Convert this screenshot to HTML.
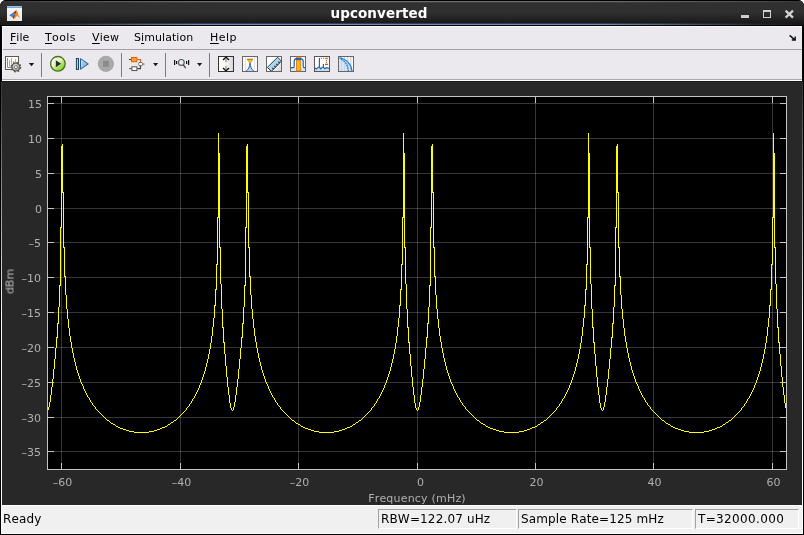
<!DOCTYPE html>
<html><head><meta charset="utf-8"><title>upconverted</title>
<style>
html,body{margin:0;padding:0;background:#fff;}
body{font-kerning:none;font-variant-ligatures:none;width:804px;height:535px;position:relative;overflow:hidden;font-family:"DejaVu Sans","Liberation Sans",sans-serif;}
div{position:absolute;box-sizing:border-box;}
#win{left:0;top:0;width:804px;height:535px;background:#000;border-radius:6px 6px 0 0;overflow:hidden;}
#title{left:0;top:0;width:804px;height:26px;background:linear-gradient(#000 0px,#000 1px,#343434 1px,#343434 2px,#323232 2px,#323232 3px,#303030 3px,#303030 12px,#222222 19px,#191919 23px,#141414 25px,#000 25px,#000 26px);}
#tblue{left:0;top:23px;width:804px;height:2px;background:linear-gradient(to right,rgba(106,140,184,0) 0px,rgba(106,140,184,0.25) 60px,rgba(106,140,184,1) 200px,rgba(106,140,184,1) 604px,rgba(106,140,184,0.25) 744px,rgba(106,140,184,0) 804px);}
#thi{left:0;top:1px;width:804px;height:1px;background:linear-gradient(to right,rgba(112,112,112,0) 0px,rgba(112,112,112,0.35) 40px,rgba(112,112,112,1) 220px,rgba(112,112,112,1) 584px,rgba(112,112,112,0.35) 764px,rgba(112,112,112,0) 804px);}
#thi2{left:0;top:2px;width:804px;height:1px;background:linear-gradient(to right,rgba(62,62,62,0) 0px,rgba(62,62,62,1) 220px,rgba(62,62,62,1) 584px,rgba(62,62,62,0) 804px);}
#tblue2{left:0;top:23px;width:804px;height:1px;background:rgba(24,24,24,0.65);}
#ttext{left:0;width:758px;top:5px;letter-spacing:0.1px;text-align:center;color:#fff;font-weight:bold;font-size:13.5px;line-height:16px;}
#sideL{left:1px;top:26px;width:1px;height:508px;background:linear-gradient(#060606 0px,#060606 55px,#333 56px,#fff 300px,#fff 508px);}
#sideL2{left:2px;top:26px;width:1px;height:54px;background:#f6f4f8;}
#sideR{left:802px;top:26px;width:1px;height:508px;background:linear-gradient(#060606 0px,#060606 55px,#333 56px,#fff 300px,#fff 508px);}
#menu{left:2px;top:26px;width:800px;height:23px;background:#ebe9ed;border-top:1px solid #f8f7fa;}
.mi{font-size:11px;line-height:14px;color:#000;white-space:pre;}
.mi u{text-decoration:underline;text-underline-offset:1.5px;}
#sep1{left:2px;top:49px;width:800px;height:1px;background:#a3a3a6;}
#tool{left:2px;top:50px;width:800px;height:29px;background:#ebe9ed;}
#tb1{left:2px;top:79px;width:800px;height:1px;background:#a9a9ad;}
#tb2{left:2px;top:80px;width:800px;height:1px;background:#ffffff;}
#plot{left:2px;top:81px;width:800px;height:424px;background:#282828;border-top:1px solid #1a1a1a;}
#axes{left:47px;top:96px;width:740px;height:374px;background:#000;}
.g{background:rgba(255,255,255,0.21);}
.t{background:#c4c4c4;}
#axb{left:47px;top:96px;width:740px;height:374px;border:1px solid #c4c4c4;}
.xl,.yl,.mi,#xlabel,#ttext,.sf,#ready{will-change:transform;}
.xl{color:#afafaf;font-size:11px;line-height:13px;text-align:center;}
.yl{color:#afafaf;font-size:11px;line-height:13px;text-align:right;}
#xlabel{left:317px;width:200px;top:492px;text-align:center;color:#afafaf;font-size:11px;line-height:13px;letter-spacing:0.2px;}
#ylabel{left:-10.5px;top:275px;width:40px;height:13px;text-align:center;color:#bcbcbc;font-size:11px;line-height:13px;transform:rotate(-90deg);}
#status{left:2px;top:505px;width:800px;height:29px;background:#f0f0f0;border-top:1px solid #fff;border-bottom:1px solid #fff;}
.sf{top:509px;height:20px;border:1px solid;border-color:#a0a0a0 #fff #fff #a0a0a0;font-size:12px;line-height:16px;color:#000;padding:1px 0 0 2px;white-space:pre;}
#ready{left:3px;top:511px;letter-spacing:0.15px;font-size:12px;line-height:16px;color:#000;}
svg{position:absolute;left:0;top:0;}
</style></head><body>
<div id="win">
<div id="title"></div><div id="thi"></div><div id="thi2"></div><div id="tblue"></div><div id="tblue2"></div><div id="sideL"></div><div id="sideR"></div>
<div id="ttext">upconverted</div>
<div id="menu"></div>
<div class="mi" style="left:10px;top:31px"><u>F</u>ile</div>
<div class="mi" style="left:45px;top:31px;letter-spacing:0.35px"><u>T</u>ools</div>
<div class="mi" style="left:92px;top:31px;letter-spacing:0.25px"><u>V</u>iew</div>
<div class="mi" style="left:134px;top:31px;letter-spacing:0.07px">S<u>i</u>mulation</div>
<div class="mi" style="left:209.6px;top:31px;letter-spacing:0.5px"><u>H</u>elp</div>
<div id="sep1"></div>
<div id="tool"></div>
<div id="sideL2"></div><div id="tb1"></div><div id="tb2"></div>
<div id="plot"></div>
<div id="axes"></div>
<div class="g" style="left:61px;top:96px;width:1px;height:373px"></div><div class="g" style="left:180px;top:96px;width:1px;height:373px"></div><div class="g" style="left:298px;top:96px;width:1px;height:373px"></div><div class="g" style="left:417px;top:96px;width:1px;height:373px"></div><div class="g" style="left:535px;top:96px;width:1px;height:373px"></div><div class="g" style="left:653px;top:96px;width:1px;height:373px"></div><div class="g" style="left:772px;top:96px;width:1px;height:373px"></div><div class="g" style="left:47px;top:103px;width:739px;height:1px"></div><div class="g" style="left:47px;top:138px;width:739px;height:1px"></div><div class="g" style="left:47px;top:173px;width:739px;height:1px"></div><div class="g" style="left:47px;top:208px;width:739px;height:1px"></div><div class="g" style="left:47px;top:242px;width:739px;height:1px"></div><div class="g" style="left:47px;top:277px;width:739px;height:1px"></div><div class="g" style="left:47px;top:312px;width:739px;height:1px"></div><div class="g" style="left:47px;top:347px;width:739px;height:1px"></div><div class="g" style="left:47px;top:382px;width:739px;height:1px"></div><div class="g" style="left:47px;top:417px;width:739px;height:1px"></div><div class="g" style="left:47px;top:451px;width:739px;height:1px"></div>
<svg width="804" height="535" viewBox="0 0 804 535"><path d="M48 407h1v3h-1zM49 402h1v5h-1zM50 395h1v7h-1zM51 387h1v8h-1zM52 379h1v8h-1zM53 369h1v10h-1zM54 359h1v10h-1zM55 348h1v11h-1zM56 337h1v11h-1zM57 323h1v15h-1zM58 307h1v17h-1zM59 285h1v22h-1zM60 227h1v59h-1zM61 146h1v82h-1zM62 144h1v49h-1zM63 192h1v56h-1zM64 247h1v30h-1zM65 276h1v19h-1zM66 295h1v14h-1zM67 309h1v10h-1zM68 319h1v9h-1zM69 328h1v8h-1zM70 336h1v6h-1zM71 342h1v6h-1zM72 348h1v5h-1zM73 353h1v5h-1zM74 358h1v4h-1zM75 362h1v4h-1zM76 366h1v4h-1zM77 370h1v3h-1zM78 373h1v3h-1zM79 376h1v3h-1zM80 379h1v3h-1zM81 382h1v2h-1zM82 384h1v2h-1zM83 386h1v3h-1zM84 389h1v2h-1zM85 391h1v2h-1zM86 393h1v2h-1zM87 395h1v2h-1zM88 397h1v1h-1zM89 398h1v2h-1zM90 400h1v2h-1zM91 402h1v1h-1zM92 403h1v2h-1zM93 405h1v1h-1zM94 406h1v1h-1zM95 407h1v2h-1zM96 409h1v1h-1zM97 410h1v1h-1zM98 411h1v1h-1zM99 412h1v1h-1zM100 413h1v1h-1zM101 414h1v1h-1zM102 415h1v1h-1zM103 416h1v1h-1zM104 417h1v1h-1zM105 418h1v1h-1zM106 419h1v1h-1zM107 420h2v1h-2zM109 421h1v1h-1zM110 422h1v1h-1zM111 423h2v1h-2zM113 424h2v1h-2zM115 425h1v1h-1zM116 426h2v1h-2zM118 427h2v1h-2zM120 428h3v1h-3zM123 429h3v1h-3zM126 430h3v1h-3zM129 431h5v1h-5zM134 432h15v1h-15zM149 431h5v1h-5zM154 430h3v1h-3zM157 429h3v1h-3zM160 428h2v1h-2zM162 427h3v1h-3zM165 426h2v1h-2zM167 425h1v1h-1zM168 424h2v1h-2zM170 423h1v1h-1zM171 422h2v1h-2zM173 421h1v1h-1zM174 420h2v1h-2zM176 419h1v1h-1zM177 418h1v1h-1zM178 417h1v1h-1zM179 416h1v1h-1zM180 415h1v1h-1zM181 414h1v1h-1zM182 413h1v1h-1zM183 412h1v1h-1zM184 411h1v1h-1zM185 410h1v1h-1zM186 408h1v2h-1zM187 407h1v1h-1zM188 406h1v1h-1zM189 404h1v2h-1zM190 403h1v1h-1zM191 401h1v2h-1zM192 399h1v2h-1zM193 398h1v1h-1zM194 396h1v2h-1zM195 394h1v2h-1zM196 392h1v2h-1zM197 390h1v2h-1zM198 388h1v2h-1zM199 385h1v3h-1zM200 383h1v2h-1zM201 380h1v3h-1zM202 377h1v3h-1zM203 374h1v3h-1zM204 371h1v3h-1zM205 367h1v4h-1zM206 363h1v4h-1zM207 359h1v4h-1zM208 354h1v5h-1zM209 349h1v5h-1zM210 343h1v6h-1zM211 336h1v7h-1zM212 327h1v9h-1zM213 318h1v9h-1zM214 305h1v13h-1zM215 289h1v17h-1zM216 264h1v26h-1zM217 217h1v48h-1zM218 133h1v85h-1zM219 153h1v95h-1zM220 247h1v37h-1zM221 284h1v25h-1zM222 309h1v19h-1zM223 327h1v16h-1zM224 342h1v12h-1zM225 354h1v12h-1zM226 366h1v11h-1zM227 377h1v10h-1zM228 387h1v8h-1zM229 395h1v8h-1zM230 403h1v5h-1zM231 408h1v2h-1zM232 410h1v1h-1zM233 407h1v3h-1zM234 402h1v5h-1zM235 395h1v7h-1zM236 387h1v8h-1zM237 379h1v8h-1zM238 369h1v10h-1zM239 359h1v10h-1zM240 348h1v11h-1zM241 337h1v11h-1zM242 323h1v15h-1zM243 307h1v17h-1zM244 285h1v22h-1zM245 227h1v59h-1zM246 146h1v82h-1zM247 144h1v49h-1zM248 192h1v56h-1zM249 247h1v30h-1zM250 276h1v19h-1zM251 295h1v14h-1zM252 309h1v10h-1zM253 319h1v9h-1zM254 328h1v8h-1zM255 336h1v6h-1zM256 342h1v6h-1zM257 348h1v5h-1zM258 353h1v5h-1zM259 358h1v4h-1zM260 362h1v4h-1zM261 366h1v4h-1zM262 370h1v3h-1zM263 373h1v3h-1zM264 376h1v3h-1zM265 379h1v3h-1zM266 382h1v2h-1zM267 384h1v2h-1zM268 386h1v3h-1zM269 389h1v2h-1zM270 391h1v2h-1zM271 393h1v2h-1zM272 395h1v2h-1zM273 397h1v1h-1zM274 398h1v2h-1zM275 400h1v2h-1zM276 402h1v1h-1zM277 403h1v2h-1zM278 405h1v1h-1zM279 406h1v1h-1zM280 407h1v2h-1zM281 409h1v1h-1zM282 410h1v1h-1zM283 411h1v1h-1zM284 412h1v1h-1zM285 413h1v1h-1zM286 414h1v1h-1zM287 415h1v1h-1zM288 416h1v1h-1zM289 417h1v1h-1zM290 418h1v1h-1zM291 419h1v1h-1zM292 420h2v1h-2zM294 421h1v1h-1zM295 422h1v1h-1zM296 423h2v1h-2zM298 424h2v1h-2zM300 425h1v1h-1zM301 426h2v1h-2zM303 427h2v1h-2zM305 428h3v1h-3zM308 429h3v1h-3zM311 430h3v1h-3zM314 431h5v1h-5zM319 432h15v1h-15zM334 431h5v1h-5zM339 430h3v1h-3zM342 429h3v1h-3zM345 428h2v1h-2zM347 427h3v1h-3zM350 426h2v1h-2zM352 425h1v1h-1zM353 424h2v1h-2zM355 423h1v1h-1zM356 422h2v1h-2zM358 421h1v1h-1zM359 420h2v1h-2zM361 419h1v1h-1zM362 418h1v1h-1zM363 417h1v1h-1zM364 416h1v1h-1zM365 415h1v1h-1zM366 414h1v1h-1zM367 413h1v1h-1zM368 412h1v1h-1zM369 411h1v1h-1zM370 410h1v1h-1zM371 408h1v2h-1zM372 407h1v1h-1zM373 406h1v1h-1zM374 404h1v2h-1zM375 403h1v1h-1zM376 401h1v2h-1zM377 399h1v2h-1zM378 398h1v1h-1zM379 396h1v2h-1zM380 394h1v2h-1zM381 392h1v2h-1zM382 390h1v2h-1zM383 388h1v2h-1zM384 385h1v3h-1zM385 383h1v2h-1zM386 380h1v3h-1zM387 377h1v3h-1zM388 374h1v3h-1zM389 371h1v3h-1zM390 367h1v4h-1zM391 363h1v4h-1zM392 359h1v4h-1zM393 354h1v5h-1zM394 349h1v5h-1zM395 343h1v6h-1zM396 336h1v7h-1zM397 327h1v9h-1zM398 318h1v9h-1zM399 305h1v13h-1zM400 289h1v17h-1zM401 264h1v26h-1zM402 217h1v48h-1zM403 133h1v85h-1zM404 153h1v95h-1zM405 247h1v37h-1zM406 284h1v25h-1zM407 309h1v19h-1zM408 327h1v16h-1zM409 342h1v12h-1zM410 354h1v12h-1zM411 366h1v11h-1zM412 377h1v10h-1zM413 387h1v8h-1zM414 395h1v8h-1zM415 403h1v5h-1zM416 408h1v2h-1zM417 410h1v1h-1zM418 407h1v3h-1zM419 402h1v5h-1zM420 395h1v7h-1zM421 387h1v8h-1zM422 379h1v8h-1zM423 369h1v10h-1zM424 359h1v10h-1zM425 348h1v11h-1zM426 337h1v11h-1zM427 323h1v15h-1zM428 307h1v17h-1zM429 285h1v22h-1zM430 227h1v59h-1zM431 146h1v82h-1zM432 144h1v49h-1zM433 192h1v56h-1zM434 247h1v30h-1zM435 276h1v19h-1zM436 295h1v14h-1zM437 309h1v10h-1zM438 319h1v9h-1zM439 328h1v8h-1zM440 336h1v6h-1zM441 342h1v6h-1zM442 348h1v5h-1zM443 353h1v5h-1zM444 358h1v4h-1zM445 362h1v4h-1zM446 366h1v4h-1zM447 370h1v3h-1zM448 373h1v3h-1zM449 376h1v3h-1zM450 379h1v3h-1zM451 382h1v2h-1zM452 384h1v2h-1zM453 386h1v3h-1zM454 389h1v2h-1zM455 391h1v2h-1zM456 393h1v2h-1zM457 395h1v2h-1zM458 397h1v1h-1zM459 398h1v2h-1zM460 400h1v2h-1zM461 402h1v1h-1zM462 403h1v2h-1zM463 405h1v1h-1zM464 406h1v1h-1zM465 407h1v2h-1zM466 409h1v1h-1zM467 410h1v1h-1zM468 411h1v1h-1zM469 412h1v1h-1zM470 413h1v1h-1zM471 414h1v1h-1zM472 415h1v1h-1zM473 416h1v1h-1zM474 417h1v1h-1zM475 418h1v1h-1zM476 419h1v1h-1zM477 420h2v1h-2zM479 421h1v1h-1zM480 422h1v1h-1zM481 423h2v1h-2zM483 424h2v1h-2zM485 425h1v1h-1zM486 426h2v1h-2zM488 427h2v1h-2zM490 428h3v1h-3zM493 429h3v1h-3zM496 430h3v1h-3zM499 431h5v1h-5zM504 432h15v1h-15zM519 431h5v1h-5zM524 430h3v1h-3zM527 429h3v1h-3zM530 428h2v1h-2zM532 427h3v1h-3zM535 426h2v1h-2zM537 425h1v1h-1zM538 424h2v1h-2zM540 423h1v1h-1zM541 422h2v1h-2zM543 421h1v1h-1zM544 420h2v1h-2zM546 419h1v1h-1zM547 418h1v1h-1zM548 417h1v1h-1zM549 416h1v1h-1zM550 415h1v1h-1zM551 414h1v1h-1zM552 413h1v1h-1zM553 412h1v1h-1zM554 411h1v1h-1zM555 410h1v1h-1zM556 408h1v2h-1zM557 407h1v1h-1zM558 406h1v1h-1zM559 404h1v2h-1zM560 403h1v1h-1zM561 401h1v2h-1zM562 399h1v2h-1zM563 398h1v1h-1zM564 396h1v2h-1zM565 394h1v2h-1zM566 392h1v2h-1zM567 390h1v2h-1zM568 388h1v2h-1zM569 385h1v3h-1zM570 383h1v2h-1zM571 380h1v3h-1zM572 377h1v3h-1zM573 374h1v3h-1zM574 371h1v3h-1zM575 367h1v4h-1zM576 363h1v4h-1zM577 359h1v4h-1zM578 354h1v5h-1zM579 349h1v5h-1zM580 343h1v6h-1zM581 336h1v7h-1zM582 327h1v9h-1zM583 318h1v9h-1zM584 305h1v13h-1zM585 289h1v17h-1zM586 264h1v26h-1zM587 217h1v48h-1zM588 133h1v85h-1zM589 153h1v95h-1zM590 247h1v37h-1zM591 284h1v25h-1zM592 309h1v19h-1zM593 327h1v16h-1zM594 342h1v12h-1zM595 354h1v12h-1zM596 366h1v11h-1zM597 377h1v10h-1zM598 387h1v8h-1zM599 395h1v8h-1zM600 403h1v5h-1zM601 408h1v2h-1zM602 410h1v1h-1zM603 407h1v3h-1zM604 402h1v5h-1zM605 395h1v7h-1zM606 387h1v8h-1zM607 379h1v8h-1zM608 369h1v10h-1zM609 359h1v10h-1zM610 348h1v11h-1zM611 337h1v11h-1zM612 323h1v15h-1zM613 307h1v17h-1zM614 285h1v22h-1zM615 227h1v59h-1zM616 146h1v82h-1zM617 144h1v49h-1zM618 192h1v56h-1zM619 247h1v30h-1zM620 276h1v19h-1zM621 295h1v14h-1zM622 309h1v10h-1zM623 319h1v9h-1zM624 328h1v8h-1zM625 336h1v6h-1zM626 342h1v6h-1zM627 348h1v5h-1zM628 353h1v5h-1zM629 358h1v4h-1zM630 362h1v4h-1zM631 366h1v4h-1zM632 370h1v3h-1zM633 373h1v3h-1zM634 376h1v3h-1zM635 379h1v3h-1zM636 382h1v2h-1zM637 384h1v2h-1zM638 386h1v3h-1zM639 389h1v2h-1zM640 391h1v2h-1zM641 393h1v2h-1zM642 395h1v2h-1zM643 397h1v1h-1zM644 398h1v2h-1zM645 400h1v2h-1zM646 402h1v1h-1zM647 403h1v2h-1zM648 405h1v1h-1zM649 406h1v1h-1zM650 407h1v2h-1zM651 409h1v1h-1zM652 410h1v1h-1zM653 411h1v1h-1zM654 412h1v1h-1zM655 413h1v1h-1zM656 414h1v1h-1zM657 415h1v1h-1zM658 416h1v1h-1zM659 417h1v1h-1zM660 418h1v1h-1zM661 419h1v1h-1zM662 420h2v1h-2zM664 421h1v1h-1zM665 422h1v1h-1zM666 423h2v1h-2zM668 424h2v1h-2zM670 425h1v1h-1zM671 426h2v1h-2zM673 427h2v1h-2zM675 428h3v1h-3zM678 429h3v1h-3zM681 430h3v1h-3zM684 431h5v1h-5zM689 432h15v1h-15zM704 431h5v1h-5zM709 430h3v1h-3zM712 429h3v1h-3zM715 428h2v1h-2zM717 427h3v1h-3zM720 426h2v1h-2zM722 425h1v1h-1zM723 424h2v1h-2zM725 423h1v1h-1zM726 422h2v1h-2zM728 421h1v1h-1zM729 420h2v1h-2zM731 419h1v1h-1zM732 418h1v1h-1zM733 417h1v1h-1zM734 416h1v1h-1zM735 415h1v1h-1zM736 414h1v1h-1zM737 413h1v1h-1zM738 412h1v1h-1zM739 411h1v1h-1zM740 410h1v1h-1zM741 408h1v2h-1zM742 407h1v1h-1zM743 406h1v1h-1zM744 404h1v2h-1zM745 403h1v1h-1zM746 401h1v2h-1zM747 399h1v2h-1zM748 398h1v1h-1zM749 396h1v2h-1zM750 394h1v2h-1zM751 392h1v2h-1zM752 390h1v2h-1zM753 388h1v2h-1zM754 385h1v3h-1zM755 383h1v2h-1zM756 380h1v3h-1zM757 377h1v3h-1zM758 374h1v3h-1zM759 371h1v3h-1zM760 367h1v4h-1zM761 363h1v4h-1zM762 359h1v4h-1zM763 354h1v5h-1zM764 349h1v5h-1zM765 343h1v6h-1zM766 336h1v7h-1zM767 327h1v9h-1zM768 318h1v9h-1zM769 305h1v13h-1zM770 289h1v17h-1zM771 264h1v26h-1zM772 217h1v48h-1zM773 133h1v85h-1zM774 153h1v95h-1zM775 247h1v37h-1zM776 284h1v25h-1zM777 309h1v19h-1zM778 327h1v16h-1zM779 342h1v12h-1zM780 354h1v12h-1zM781 366h1v11h-1zM782 377h1v10h-1zM783 387h1v8h-1zM784 395h1v8h-1zM785 403h1v5h-1z" fill="#ffff00" shape-rendering="crispEdges"/></svg>
<div id="axb"></div>
<div class="t" style="left:61px;top:96px;width:1px;height:7px"></div><div class="t" style="left:61px;top:463px;width:1px;height:7px"></div><div class="xl" style="left:41.5px;top:476px;width:41px">–60</div><div class="t" style="left:180px;top:96px;width:1px;height:7px"></div><div class="t" style="left:180px;top:463px;width:1px;height:7px"></div><div class="xl" style="left:160.5px;top:476px;width:41px">–40</div><div class="t" style="left:298px;top:96px;width:1px;height:7px"></div><div class="t" style="left:298px;top:463px;width:1px;height:7px"></div><div class="xl" style="left:278.5px;top:476px;width:41px">–20</div><div class="t" style="left:417px;top:96px;width:1px;height:7px"></div><div class="t" style="left:417px;top:463px;width:1px;height:7px"></div><div class="xl" style="left:400px;top:476px;width:41px">0</div><div class="t" style="left:535px;top:96px;width:1px;height:7px"></div><div class="t" style="left:535px;top:463px;width:1px;height:7px"></div><div class="xl" style="left:516px;top:476px;width:41px">20</div><div class="t" style="left:653px;top:96px;width:1px;height:7px"></div><div class="t" style="left:653px;top:463px;width:1px;height:7px"></div><div class="xl" style="left:634px;top:476px;width:41px">40</div><div class="t" style="left:772px;top:96px;width:1px;height:7px"></div><div class="t" style="left:772px;top:463px;width:1px;height:7px"></div><div class="xl" style="left:753px;top:476px;width:41px">60</div><div class="t" style="left:47px;top:103px;width:7px;height:1px"></div><div class="t" style="left:780px;top:103px;width:7px;height:1px"></div><div class="yl" style="left:0px;top:98px;width:42px">15</div><div class="t" style="left:47px;top:138px;width:7px;height:1px"></div><div class="t" style="left:780px;top:138px;width:7px;height:1px"></div><div class="yl" style="left:0px;top:133px;width:42px">10</div><div class="t" style="left:47px;top:173px;width:7px;height:1px"></div><div class="t" style="left:780px;top:173px;width:7px;height:1px"></div><div class="yl" style="left:0px;top:168px;width:42px">5</div><div class="t" style="left:47px;top:208px;width:7px;height:1px"></div><div class="t" style="left:780px;top:208px;width:7px;height:1px"></div><div class="yl" style="left:0px;top:203px;width:42px">0</div><div class="t" style="left:47px;top:242px;width:7px;height:1px"></div><div class="t" style="left:780px;top:242px;width:7px;height:1px"></div><div class="yl" style="left:0px;top:237px;width:41px">–5</div><div class="t" style="left:47px;top:277px;width:7px;height:1px"></div><div class="t" style="left:780px;top:277px;width:7px;height:1px"></div><div class="yl" style="left:0px;top:272px;width:41px">–10</div><div class="t" style="left:47px;top:312px;width:7px;height:1px"></div><div class="t" style="left:780px;top:312px;width:7px;height:1px"></div><div class="yl" style="left:0px;top:307px;width:41px">–15</div><div class="t" style="left:47px;top:347px;width:7px;height:1px"></div><div class="t" style="left:780px;top:347px;width:7px;height:1px"></div><div class="yl" style="left:0px;top:342px;width:41px">–20</div><div class="t" style="left:47px;top:382px;width:7px;height:1px"></div><div class="t" style="left:780px;top:382px;width:7px;height:1px"></div><div class="yl" style="left:0px;top:377px;width:41px">–25</div><div class="t" style="left:47px;top:417px;width:7px;height:1px"></div><div class="t" style="left:780px;top:417px;width:7px;height:1px"></div><div class="yl" style="left:0px;top:412px;width:41px">–30</div><div class="t" style="left:47px;top:451px;width:7px;height:1px"></div><div class="t" style="left:780px;top:451px;width:7px;height:1px"></div><div class="yl" style="left:0px;top:446px;width:41px">–35</div>
<div id="xlabel">Frequency (mHz)</div>
<div id="ylabel">dBm</div>
<div id="status"></div>
<div id="ready">Ready</div>
<div class="sf" style="left:378px;width:139px;letter-spacing:0.15px">RBW=122.07 uHz</div>
<div class="sf" style="left:518px;width:175px;letter-spacing:0.13px">Sample Rate=125 mHz</div>
<div class="sf" style="left:695px;width:104px;letter-spacing:0.36px">T=32000.000</div>
<svg id="icons" width="804" height="90" viewBox="0 0 804 90" style="position:absolute;left:0;top:0">
<defs>
<linearGradient id="gBox" x1="0" y1="0" x2="1" y2="0"><stop offset="0" stop-color="#ffffff"/><stop offset="0.55" stop-color="#f6f6f6"/><stop offset="1" stop-color="#d4d4d4"/></linearGradient>
<linearGradient id="gBox2" x1="0" y1="0" x2="1" y2="1"><stop offset="0" stop-color="#ffffff"/><stop offset="0.55" stop-color="#fafafa"/><stop offset="1" stop-color="#cfcfcf"/></linearGradient>
<linearGradient id="gPlay" x1="0.15" y1="0.1" x2="0.85" y2="0.9"><stop offset="0" stop-color="#ffffff"/><stop offset="0.42" stop-color="#e0f6bc"/><stop offset="0.75" stop-color="#a0dc54"/><stop offset="1" stop-color="#7cc830"/></linearGradient>
<linearGradient id="gStep" x1="0" y1="0" x2="1" y2="0.6"><stop offset="0" stop-color="#cde8f6"/><stop offset="1" stop-color="#62aada"/></linearGradient>
<radialGradient id="gGear" cx="0.4" cy="0.35" r="0.7"><stop offset="0" stop-color="#e0e0e0"/><stop offset="1" stop-color="#8c8c8c"/></radialGradient>
<linearGradient id="gRul" x1="0" y1="0" x2="1" y2="1"><stop offset="0" stop-color="#c8e8f8"/><stop offset="1" stop-color="#8cc4e8"/></linearGradient>
<linearGradient id="gIco" x1="0" y1="0" x2="0" y2="1"><stop offset="0" stop-color="#a8cce8"/><stop offset="0.15" stop-color="#5a9ad4"/><stop offset="0.16" stop-color="#f6f6f6"/><stop offset="1" stop-color="#e8e8e8"/></linearGradient>
</defs>
<!-- title bar app icon -->
<rect x="7" y="6" width="15" height="15" fill="url(#gIco)"/>
<path d="M9.2 15.3 L13.4 12.6 L15 14.2 L12.4 17.2 Z" fill="#3f86c8"/>
<path d="M13.4 12.6 L15.6 10.8 L16.4 9.9 L15.6 15 L13.6 19 L12.4 17.2 L15 14.2 Z" fill="#9c2a14"/>
<path d="M16.4 9.9 L17.6 12.6 L18.6 16 L19.8 17.6 L18.4 17 L17.2 15.6 L15.4 18 L13.6 19 L15.4 15 Z" fill="#f08a1c"/>
<path d="M16.4 9.9 L17.4 12.6 L18.4 16 L19.8 17.6 L17.8 14.6 Z" fill="#c8321a"/>
<!-- title bar buttons -->
<rect x="741" y="15" width="8" height="3" fill="#d0d0d0"/>
<rect x="763.5" y="11" width="7" height="6.5" fill="none" stroke="#d0d0d0" stroke-width="1"/>
<rect x="763" y="10" width="8" height="2" fill="#d0d0d0"/>
<path d="M785.6 10.6 L793 17.6 M793 10.6 L785.6 17.6" stroke="#d4d4d4" stroke-width="2.2" fill="none"/>
<!-- menu arrow -->
<path d="M789.6 35.4 L794.6 39.6 M791.8 40 H795.2 V36.6" stroke="#111" stroke-width="1.4" fill="none"/>
<!-- toolbar icon 1: chart + gear -->
<rect x="5.5" y="56.5" width="13" height="13" fill="#fff" stroke="#5a5a5a"/>
<path d="M7.5 58 V67.5 H13" stroke="#8a8a8a" fill="none"/>
<path d="M9.5 60 V66.5 M11.5 58 V66.5 M13.5 61 V66 M15.5 59 V64" stroke="#f5a21c" stroke-width="1.1" fill="none"/>
<g>
<circle cx="15.9" cy="67.1" r="4.0" fill="url(#gGear)" stroke="#4a4a4a" stroke-width="0.9"/>
<circle cx="15.9" cy="67.1" r="4.7" fill="none" stroke="#585858" stroke-width="1.4" stroke-dasharray="1.85 1.84"/>
<circle cx="15.9" cy="67.1" r="1.5" fill="#fbfbfb" stroke="#555" stroke-width="0.7"/>
</g>
<path d="M28.8 63 H34.2 L31.5 66.2 Z" fill="#1a1a1a"/>
<rect x="41" y="53" width="1" height="24" fill="#7c7c7c"/>
<!-- play -->
<circle cx="57.9" cy="63.8" r="7.3" fill="url(#gPlay)" stroke="#4a701c" stroke-width="1.3"/>
<path d="M55.8 60.3 V67.2 L61.1 63.7 Z" fill="#2a2a2a"/>
<!-- step -->
<rect x="76.4" y="58.5" width="2.1" height="10.9" fill="#a8d0ea" stroke="#1e3e60" stroke-width="1"/>
<path d="M80.5 58.6 V69.3 L88.4 63.95 Z" fill="url(#gStep)" stroke="#2e5c8c" stroke-width="1"/>
<!-- stop -->
<circle cx="105.9" cy="63.8" r="7.6" fill="#a9a9a9" stroke="#9c9c9c" stroke-width="0.8"/>
<rect x="103" y="60.8" width="6" height="6" fill="#8b8b8b"/>
<rect x="121" y="53" width="1" height="24" fill="#7c7c7c"/>
<!-- block diagram -->
<rect x="130.3" y="56.4" width="7.6" height="6.2" rx="1" fill="#fbe28a"/>
<rect x="131.5" y="57.5" width="5.4" height="4.2" fill="#f39a4a" stroke="#d86a14" stroke-width="1"/>
<path d="M129 59.5 H131" stroke="#444" fill="none"/>
<path d="M137.4 59.5 H140.5 V62.3" stroke="#d0601a" stroke-width="1.1" fill="none"/>
<rect x="138.7" y="62.4" width="3.8" height="3.3" rx="1.2" fill="#fff" stroke="#555" stroke-width="0.9"/>
<path d="M142.6 64.1 H144.6" stroke="#555" fill="none"/>
<path d="M140.5 65.8 V68.6 H137.3" stroke="#444" stroke-width="1.1" fill="none"/>
<rect x="131.9" y="66.8" width="5" height="3.8" fill="#fff" stroke="#444" stroke-width="0.9"/>
<path d="M129.2 68.6 H131.6" stroke="#444" fill="none"/>
<path d="M153 63 H158.2 L155.6 66.2 Z" fill="#1a1a1a"/>
<rect x="165" y="53" width="1" height="24" fill="#7c7c7c"/>
<!-- zoom x -->
<rect x="174" y="60" width="1.2" height="5" fill="#111"/>
<rect x="176" y="61" width="1.2" height="3" fill="#111"/>
<rect x="186" y="61" width="1.2" height="3" fill="#111"/>
<rect x="188" y="60" width="1.2" height="5" fill="#111"/>
<circle cx="181.3" cy="62.4" r="2.9" fill="#e4eef6" stroke="#5c5c5c" stroke-width="1.2"/>
<path d="M183.4 64.9 L185.6 68.2" stroke="#444" stroke-width="1.3" fill="none"/>
<path d="M197 63 H202.2 L199.6 66.2 Z" fill="#1a1a1a"/>
<rect x="209" y="53" width="1" height="24" fill="#7c7c7c"/>
<!-- A autoscale -->
<rect x="218.5" y="56.5" width="15" height="15" fill="url(#gBox)" stroke="#333"/>
<path d="M223 60 L226 57.3 L229 60" stroke="#111" stroke-width="1.4" fill="none"/>
<path d="M226 58.5 V62.2" stroke="#8a8a8a" stroke-width="1.2" fill="none"/>
<path d="M223 68 L226 70.7 L229 68" stroke="#111" stroke-width="1.4" fill="none"/>
<path d="M226 65.8 V69.6" stroke="#8a8a8a" stroke-width="1.2" fill="none"/>
<!-- B peak -->
<rect x="242.5" y="56.5" width="15" height="15" fill="#fff" stroke="#666"/>
<rect x="245" y="57" width="1.2" height="14" fill="#e4e4e4"/><rect x="254" y="57" width="1.2" height="14" fill="#e4e4e4"/>
<path d="M250 63 C249.7 67 248.4 69.6 246.2 71 H253.8 C251.6 69.6 250.3 67 250 63 Z" fill="#b4d8ec"/><path d="M250 62.6 C249.7 67 248.4 69.6 246 71.2 M250 62.6 C250.3 67 251.6 69.6 254 71.2" fill="none" stroke="#2a5ca4" stroke-width="1"/>
<path d="M247.2 59.3 H252.8 L250 63.6 Z" fill="#fccc14" stroke="#c8801c" stroke-width="0.7"/>
<path d="M247 59.3 H253" stroke="#b8681c" stroke-width="0.9"/>
<!-- C ruler -->
<rect x="266.5" y="56.5" width="15" height="15" fill="url(#gBox2)" stroke="#666"/>
<path d="M267.4 67.4 L277.6 57.2 L281.4 61.2 L271.4 71.4 Z" fill="url(#gRul)" stroke="#222" stroke-width="0.9"/>
<path d="M279.6 63 l-1.3 -1.3 M277.6 65.1 l-1.3 -1.3 M275.6 67.1 l-1.3 -1.3 M273.6 69.2 l-1.3 -1.3" stroke="#1c2c3c" stroke-width="1.1" fill="none"/>
<!-- D channel -->
<rect x="290.5" y="56.5" width="15" height="15" fill="#fff" stroke="#666"/>
<rect x="291" y="68" width="14" height="3" fill="#dce8f0"/>
<rect x="296.4" y="57" width="4.4" height="14" fill="#ffb400" stroke="#d4741c" stroke-width="0.8"/>
<path d="M291 67.6 H293.6 C294.2 67.6 294.2 67 294.2 66 V61.6 C294.2 59.6 295 58.8 296.4 58.6 l0.7 0.9 l0.8 -0.9 l0.7 0.9 l0.8 -0.9 l0.7 0.9 l0.7 -0.9 C302.2 58.8 303.2 59.6 303.2 61.6 V66 C303.2 67 303.2 67.6 303.8 67.6 H305" stroke="#1c5cac" stroke-width="1.2" fill="none"/>
<!-- E peak finder -->
<rect x="314.5" y="56.5" width="15" height="15" fill="#fff" stroke="#555"/>
<path d="M315 68 L316.4 69 L317.8 67.6 L318.8 67 L319.4 67 V58 V67 L320.6 68.8 L322 67.4 L323.4 67 V64 V67 L324.8 68.8 L326.4 67.6 L327.8 68 L329 68.6 V71 H315 Z" fill="#c8e0ec" stroke="none"/>
<path d="M315 68 L316.4 69 L317.8 67.6 L318.8 67 L319.4 67 V58 V67 L320.6 68.8 L322 67.4 L323.4 67 V64 V67 L324.8 68.8 L326.4 67.6 L327.8 68 L329 68.6" fill="none" stroke="#1c5cac" stroke-width="1.1"/>
<path d="M321 58.3 h1 M323 58.3 h1 M325 58.3 h3 M326 60.4 h1 M326 62.4 h1 M325 64.4 h3" stroke="#c85a14" stroke-width="1.1" fill="none"/>
<!-- F ccdf -->
<rect x="338.5" y="56.5" width="15" height="15" fill="#fff" stroke="#666"/>
<path d="M339 57.6 C346 58.4 351 63.5 352 71 H339 Z" fill="#d4e6f8"/>
<path d="M341.4 57 V71 M344.6 57 V71" stroke="#c4d4e4" stroke-width="1" fill="none"/>
<path d="M347.8 57 V71 M350.8 57 V71" stroke="#c0c0c0" stroke-width="1" fill="none"/>
<path d="M339.3 57.8 C346 58.6 351 63.5 352 71" stroke="#2484d4" stroke-width="1.3" fill="none"/>
<path d="M341 59.4 C344.8 60.6 347.8 65 348.4 71" stroke="#2a78c8" stroke-width="1.2" fill="none" stroke-dasharray="2 0.7"/>
</svg>

</div>
</body></html>
